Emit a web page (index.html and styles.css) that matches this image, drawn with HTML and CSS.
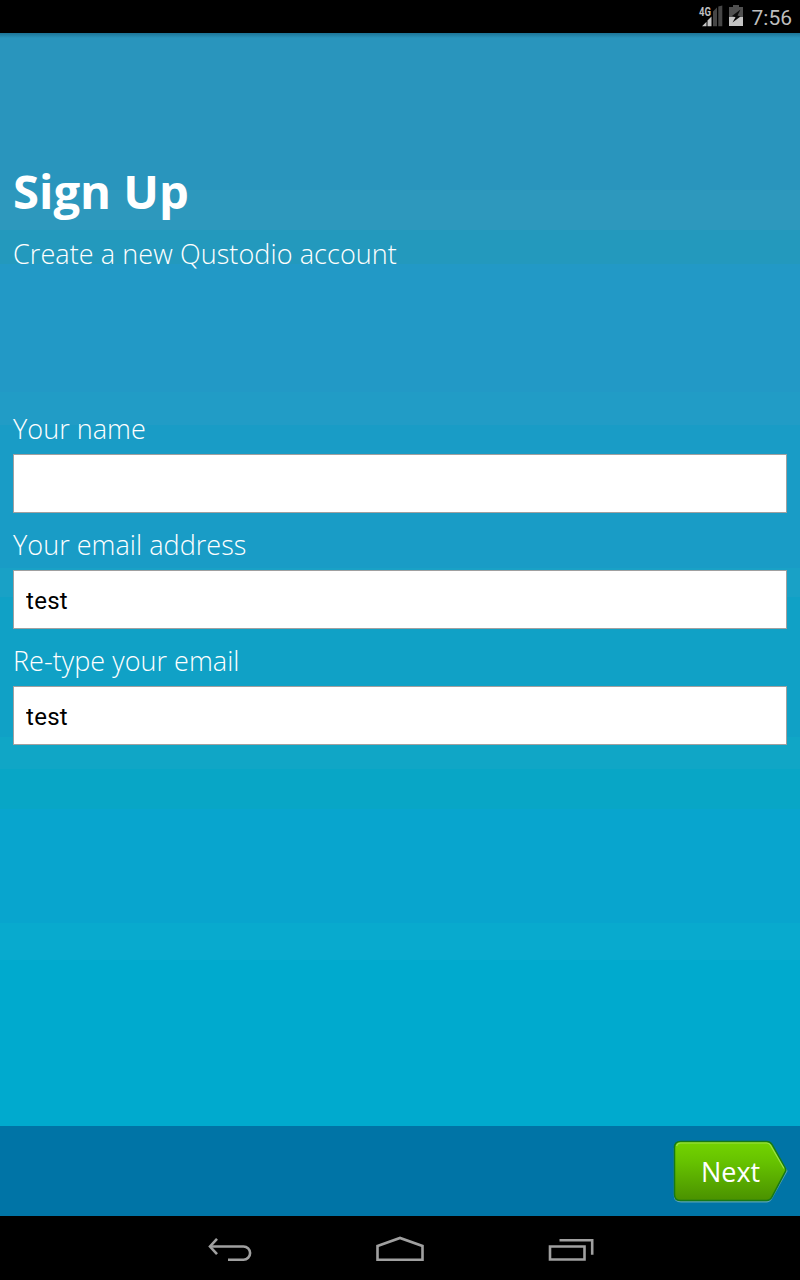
FILE: index.html
```html
<!DOCTYPE html>
<html lang="en">
<head>
<meta charset="utf-8">
<title>Sign Up</title>
<link rel="stylesheet" href="styles.css">
</head>
<body>
<div class="screen">
  <header class="status-bar">
    <svg class="signal" width="24" height="24" viewBox="0 0 24 24">
      <path d="M14 8.500l4-4V23.300h-4zM19.300 3.500l4-1V23.300h-4z" fill="#464646"/>
      <path d="M3 23.300l4.500-4.500v4.500zM8.500 17.500l4-4v9.800h-4z" fill="#c4c4c4"/>
      <text x="0" y="12.500" class="network" textLength="12" lengthAdjust="spacingAndGlyphs">4G</text>
    </svg>
    <svg class="battery" width="14" height="21" viewBox="0 0 14 21">
      <path d="M4 0h6v2h4v10H0V2h4z" fill="#505050"/>
      <path d="M0 12h14v9H0z" fill="#c4c4c4"/>
      <path d="M11.500 4.500L3 11l3.500 1.200L3.500 17.500 11.500 11.500l-3-1z" fill="#0c0c0c"/>
    </svg>
    <span class="clock">7:56</span>
  </header>
  <main class="content">
    <h1 class="title">Sign Up</h1>
    <p class="subtitle">Create a new Qustodio account</p>
    <form class="form">
      <label class="field"><span class="label">Your name</span><input class="input" type="text"></label>
      <label class="field"><span class="label">Your email address</span><input class="input" type="text" value="test"></label>
      <label class="field"><span class="label">Re-type your email</span><input class="input" type="text" value="test"></label>
    </form>
  </main>
  <footer class="actions">
    <button class="next" type="button">
      <svg class="next-shape" width="116" height="64" viewBox="0 0 116 64">
        <defs>
          <linearGradient id="green" x1="0" y1="0" x2="0" y2="1">
            <stop offset="0" stop-color="#74d400"/>
            <stop offset=".35" stop-color="#66c200"/>
            <stop offset="1" stop-color="#4a9100"/>
          </linearGradient>
        </defs>
        <path d="M8 2.500H94q3.500 0 5 3L113.800 31 99 57.500q-2 4.200-5 4.200H8q-6.500 0-6.500-6V8" fill="none" stroke="#59a3b4" stroke-width="1.400"/>
        <path d="M7.500 1.500H93.500q3.500 0 5.500 3L112.300 28.200q1 1.800 0 3.500L99 56.800q-2 3.600-5.500 3.600H7.500q-6 0-6-6V7.500q0-6 6-6z" fill="url(#green)" stroke="#167a16" stroke-width="1.500"/>
        <path d="M3.500 6q1-3 4-3H93.500q2.500 0 4 2.200L111 28.500" fill="none" stroke="#9be04b" stroke-width="1.200"/>
      </svg>
      <span class="next-label">Next</span>
    </button>
  </footer>
  <nav class="nav-bar">
    <svg width="44" height="26" viewBox="0 0 44 26" class="nav-icon">
      <path d="M2 10.500H35.500a6.600 6.600 0 0 1 0 13.200H20" />
      <path d="M9 2.800L2 10.500l7 7.700"/>
    </svg>
    <svg width="48" height="26" viewBox="0 0 48 26" class="nav-icon">
      <path d="M1.500 10L24 2l22.500 8v13.700h-45z"/>
    </svg>
    <svg width="46" height="26" viewBox="0 0 46 26" class="nav-icon">
      <path d="M2 10.500h34.500v13H2z"/><path d="M11.500 4.300h32.700v14.500"/>
    </svg>
  </nav>
</div>
</body>
</html>
```
FILE: styles.css
```css
* { box-sizing: border-box; }

body {
  margin: 0;
  background: #000;
}

.screen {
  display: flex;
  flex-direction: column;
  width: 800px;
  height: 1280px;
  overflow: hidden;
}

.status-bar {
  display: flex;
  justify-content: flex-end;
  align-items: flex-start;
  height: 33px;
  padding: 3px 8px 0 0;
  background: #000;
}

.signal { overflow: visible; }

.battery {
  margin: 2px 9px 0 6px;
}

.network {
  font: bold 12.5px Roboto, sans-serif;
  fill: #bebebe;
  stroke: #000;
  stroke-width: 2px;
  paint-order: stroke;
}

.clock {
  font: 21px/30px Roboto, sans-serif;
  color: #bebebe;
}

.content {
  flex: 1;
  padding: 120px 13px 0;
  color: #fff;
  font-family: "Open Sans", sans-serif;
  background:
    linear-gradient(rgba(0, 40, 60, 0.3), transparent 5px),
    linear-gradient(
      #2995bd 157px, #2d98bd 157px 197px, #2399bd 197px 231px,
      #2299c6 231px 359px, #219cc6 359px 392px, #199cc6 392px 535px,
      #19a1c6 535px 564px, #10a1c6 564px 704px, #10a6c6 704px 736px,
      #08a6c6 736px 776px, #08a5ce 776px 890px, #08aace 890px 927px,
      #00aace 927px);
}

.title {
  margin: 0;
  font-size: 47.2px;
  line-height: 76px;
  font-weight: 700;
}

.subtitle {
  margin: 5px 0 0;
  font-size: 27px;
  line-height: 40px;
  font-weight: 300;
  letter-spacing: 0.08px;
}

.form {
  display: flex;
  flex-direction: column;
  margin-top: 136px;
}

.field {
  display: flex;
  flex-direction: column;
  height: 116px;
}

.label {
  height: 44px;
  font-size: 27px;
  line-height: 38px;
  font-weight: 300;
  letter-spacing: 0.04px;
}

.input {
  height: 59px;
  padding: 3px 12px 0;
  border: 1px solid #a0a0a0;
  border-radius: 0;
  background: #fff;
  color: #000;
  font: 24px Roboto, sans-serif;
  letter-spacing: 0.3px;
}

.actions {
  display: flex;
  justify-content: flex-end;
  height: 90px;
  padding: 14px 11px 0 0;
  background: #0074a6;
}

.next {
  display: grid;
  width: 116px;
  height: 64px;
  padding: 0;
  border: 0;
  background: none;
}

.next-shape,
.next-label { grid-area: 1 / 1; }

.next-label {
  padding-left: 28px;
  color: #fff;
  font: 27px/63px "Open Sans", sans-serif;
  text-align: left;
}

.nav-bar {
  display: flex;
  align-items: flex-start;
  gap: 124px;
  height: 64px;
  padding: 20px 0 0 208px;
  background: #000;
}

.nav-icon {
  fill: none;
  stroke: #a0a0a0;
  stroke-width: 2.6;
}
```
